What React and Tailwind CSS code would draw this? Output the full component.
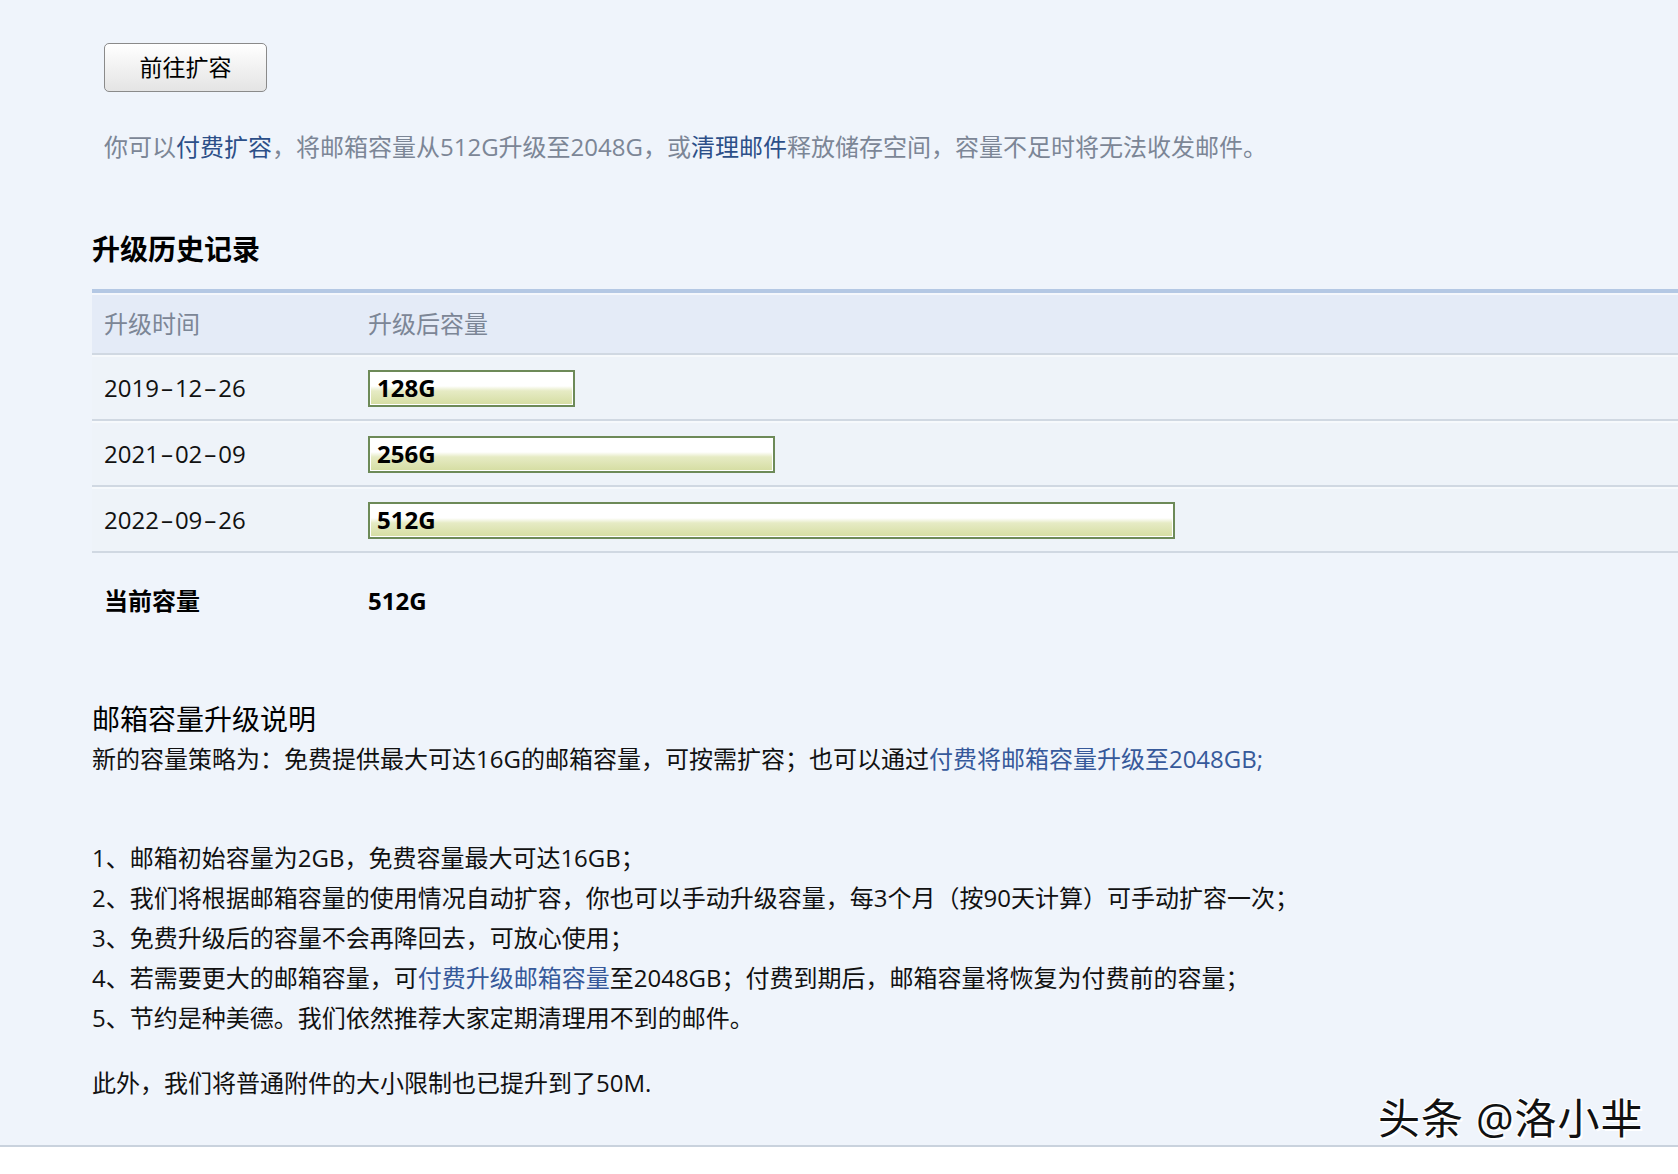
import React from "react";

const history = [
  { date: "2019-12-26", size: "128G", width: 207 },
  { date: "2021-02-09", size: "256G", width: 407 },
  { date: "2022-09-26", size: "512G", width: 807 },
];

const rules = [
  "1、邮箱初始容量为2GB，免费容量最大可达16GB；",
  "2、我们将根据邮箱容量的使用情况自动扩容，你也可以手动升级容量，每3个月（按90天计算）可手动扩容一次；",
  "3、免费升级后的容量不会再降回去，可放心使用；",
  null,
  "5、节约是种美德。我们依然推荐大家定期清理用不到的邮件。",
];

// capacity bar: white top half fading into a pale olive bottom
function CapacityBar({ size, width }) {
  return (
    <div
      className="h-[37px] border-2 border-[#6d8a58] p-[1px] bg-white"
      style={{ width }}
    >
      <div className="h-full w-full bg-[linear-gradient(to_bottom,#ffffff_0%,#ffffff_42%,#e6ebc4_58%,#d6dea4_100%)] pl-[6px] flex items-center">
        <span className="text-[24px] font-bold text-black leading-none">{size}</span>
      </div>
    </div>
  );
}

// dates in the original have wide dashes
function DateText({ value }) {
  const parts = value.split("-");
  return (
    <span>
      {parts.map((p, i) => (
        <React.Fragment key={i}>
          {i > 0 && <span className="px-[2px]">–</span>}
          {p}
        </React.Fragment>
      ))}
    </span>
  );
}

export default function App() {
  return (
    <div
      className="relative w-full min-h-[1174px] bg-[#eff4fb] text-[#111] overflow-hidden"
      style={{ fontFamily: '"Open Sans", "Noto Sans CJK SC", sans-serif' }}
    >
      <div className="pl-[92px] pt-[43px]">
        {/* Go to expand */}
        <div className="pl-[12px]">
          <button className="w-[163px] h-[49px] rounded-[5px] border-[1.5px] border-[#8a8a8a] bg-[linear-gradient(to_bottom,#ffffff,#e4e4e4)] text-[23px] text-black leading-none">
            前往扩容
          </button>
        </div>

        <p className="pl-[12px] mt-[35px] text-[24px] leading-[40px] text-[#7c8696]">
          你可以<span className="text-[#2c4f88]">付费扩容</span>，将邮箱容量从512G升级至2048G，或
          <span className="text-[#2c4f88]">清理邮件</span>释放储存空间，容量不足时将无法收发邮件。
        </p>

        {/* Upgrade history */}
        <h2 className="mt-[62px] text-[28px] leading-[40px] font-bold text-black">升级历史记录</h2>

        <div className="mt-[20px]">
          <div className="h-[4px] bg-[#b4c8e4]" />
          <div className="h-[2px] bg-[#f4f7fc]" />
          <div className="h-[58px] bg-[#e4ebf7] flex items-center text-[24px] text-[#7c8696]">
            <div className="w-[276px] pl-[12px]">升级时间</div>
            <div>升级后容量</div>
          </div>
          <div className="h-[2px] bg-[#d0d8e2]" />

          {history.map((row) => (
            <div key={row.date}>
              <div className="h-[2px] bg-[#f6f9fc]" />
              <div className="h-[62px] bg-[#eef3f9] flex items-center text-[24px]">
                <div className="w-[276px] pl-[12px]">
                  <DateText value={row.date} />
                </div>
                <CapacityBar size={row.size} width={row.width} />
              </div>
              <div className="h-[2px] bg-[#d0d8e2]" />
            </div>
          ))}

          <div className="mt-[28px] flex items-center text-[24px] leading-[40px] font-bold text-black">
            <div className="w-[276px] pl-[12px]">当前容量</div>
            <div>512G</div>
          </div>
        </div>

        {/* Explanation */}
        <h3 className="mt-[78px] text-[28px] leading-[40px] text-black">邮箱容量升级说明</h3>
        <p className="text-[24px] leading-[40px]">
          新的容量策略为：免费提供最大可达16G的邮箱容量，可按需扩容；也可以通过
          <span className="text-[#36599a]">付费将邮箱容量升级至2048GB;</span>
        </p>

        <div className="mt-[59px] text-[24px] leading-[40px]">
          {rules.map((r, i) =>
            r ? (
              <p key={i}>{r}</p>
            ) : (
              <p key={i}>
                4、若需要更大的邮箱容量，可<span className="text-[#36599a]">付费升级邮箱容量</span>
                至2048GB；付费到期后，邮箱容量将恢复为付费前的容量；
              </p>
            )
          )}
        </div>

        <p className="mt-[25px] text-[24px] leading-[40px]">此外，我们将普通附件的大小限制也已提升到了50M.</p>
      </div>

      <div className="mt-[42px] h-[2px] bg-[#c9d2dd]" />
      <div className="h-[30px] bg-white" />

      {/* watermark */}
      <div className="absolute left-[1378px] top-[1093px] text-[42px] leading-[50px] tracking-[1px] text-[#111] [text-shadow:2px_2px_0_#fff,-1px_-1px_0_#fff,1px_-1px_0_#fff,-1px_1px_0_#fff]">
        头条 @洛小芈
      </div>
    </div>
  );
}
